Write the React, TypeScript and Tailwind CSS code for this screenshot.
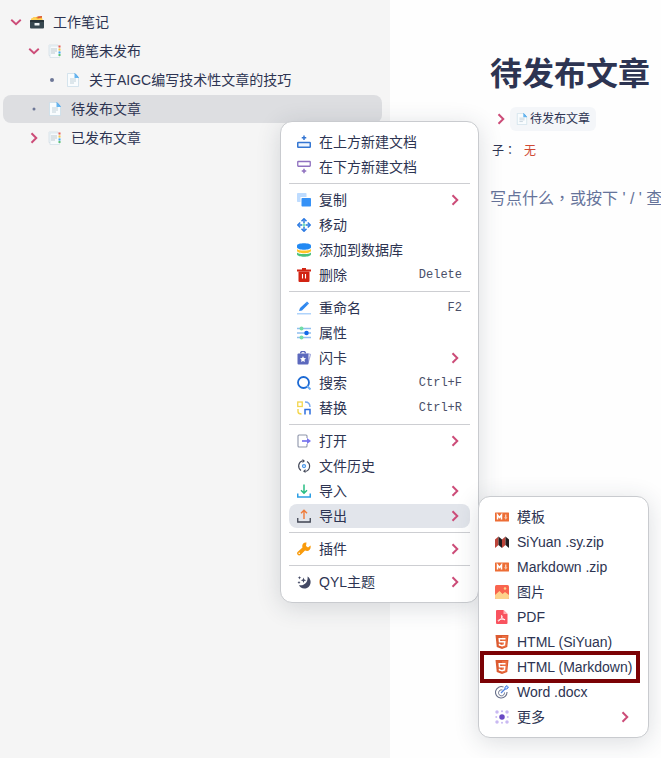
import React from 'react'

type IconProps = { className?: string }

const Svg = ({ className = 'h-3.5 w-3.5', children }: IconProps & { children: React.ReactNode }) => (
  <svg viewBox="0 0 28 28" fill="none" aria-hidden="true" className={`shrink-0 ${className}`}>
    {children}
  </svg>
)

const ChevronRight = ({ className }: IconProps) => (
  <Svg className={className}>
    <path d="M9 4.500l9.500 9.500L9 23.500" stroke="#cc4c78" strokeWidth="4" />
  </Svg>
)

const ChevronDown = () => (
  <Svg>
    <path d="M4.500 9.500l9.500 9 9.500-9" stroke="#cc4c78" strokeWidth="3.800" />
  </Svg>
)

const Bullet = ({ className = 'h-3.5 w-3.5' }: IconProps) => (
  <Svg className={className}>
    <circle cx="14" cy="14" r="4" fill="#6d7797" />
  </Svg>
)

const SmallBullet = () => (
  <Svg>
    <circle cx="14" cy="14" r="3" fill="#6d7797" />
  </Svg>
)

// Tree icons
const CardBox = () => (
  <Svg>
    <path d="M3 10l3-5 18-3v8z" fill="#f5b32d" />
    <path d="M2 7l9-3 2 3h12v4H2z" fill="#ffd257" />
    <path d="M15 3l9-1v3l-9 2z" fill="#dc5b3f" />
    <rect y="10" width="28" height="17" rx="2" fill="#37474f" />
    <path d="M0 12a2 2 0 0 1 2-2h24a2 2 0 0 1 2 2v2H0z" fill="#263238" />
    <rect x="9" y="16" width="10" height="5" rx="1" fill="#f1f5f6" />
  </Svg>
)

const Page = ({ className }: IconProps) => (
  <Svg className={className}>
    <path d="M3 1h15l7 8v18H3z" fill="#f9fcfe" stroke="#c6dbe8" strokeWidth="1.4" />
    <path d="M17 0v10h9z" fill="#65b5f0" />
    <path d="M18 1l7 8" stroke="#3d9be5" strokeWidth="1.5" />
    <path d="M8 12h12M8 16h12M8 20h8" stroke="#b4c6d1" strokeWidth="1.6" />
  </Svg>
)

const Tabs = () => (
  <Svg>
    <path d="M2 2h18v21H2z" fill="#fbfdfe" stroke="#d1dee6" strokeWidth="1.4" />
    <path d="M4 4h19v23H4z" fill="#f7fafc" stroke="#d1dee6" strokeWidth="1.4" />
    <path d="M6 10h12M6 14h12M6 18h8" stroke="#b3c0c8" strokeWidth="1.7" />
    <rect x="21" y="3" width="4" height="4" fill="#e95c50" />
    <rect x="21" y="9" width="4" height="4" fill="#f7c646" />
    <rect x="21" y="15" width="4" height="4" fill="#3da7ee" />
    <rect x="21" y="20" width="4" height="4" fill="#5abf72" />
  </Svg>
)

// Menu icons
const InsertAbove = () => (
  <Svg>
    <path d="M14 1v9M9.500 5.500h9" stroke="#3476d2" strokeWidth="3" />
    <rect x="1.500" y="15" width="25" height="9.500" rx="1" fill="#eff6ff" stroke="#3476d2" strokeWidth="3" />
  </Svg>
)

const InsertBelow = () => (
  <Svg>
    <rect x="1.500" y="3" width="25" height="9.500" rx="1" stroke="#8f70bf" strokeWidth="2.600" />
    <path d="M14 17.500v9M9.500 22h9" stroke="#8f70bf" strokeWidth="3" />
  </Svg>
)

const Copy = () => (
  <Svg>
    <rect width="19" height="18" rx="1.500" fill="#bedcff" />
    <path d="M7 8h21v20H9a2 2 0 0 1-2-2z" fill="#fff" />
    <rect x="9" y="10" width="19" height="17" rx="1.500" fill="#3692f7" />
  </Svg>
)

const Move = () => (
  <Svg>
    <path d="M14 9v10M9 14h10" stroke="#58cdb4" strokeWidth="2.400" />
    <path d="M9 6.500l5-5 5 5M9 21.500l5 5 5-5M6.500 9l-5 5 5 5M21.500 9l5 5-5 5" stroke="#2f7ce3" strokeWidth="3" />
    <path d="M14 2v8M14 18v8M2 14h8M18 14h8" stroke="#2f7ce3" strokeWidth="3" />
  </Svg>
)

const Database = () => (
  <Svg>
    <path d="M0 19c3 4 25 4 28 0v4c-2 6-26 6-28 0z" fill="#4ac17c" />
    <path d="M0 12c3 4 25 4 28 0v4c-2 6-26 6-28 0z" fill="#ffc526" />
    <path d="M0 5.500C0-1 28-1 28 5.500V9c-2 6-26 6-28 0z" fill="#2289f3" />
  </Svg>
)

const Trash = () => (
  <Svg>
    <path d="M10 0h8v3h10v4H0V3h10z" fill="#d22313" />
    <path d="M3 7h22v19a2 2 0 0 1-2 2H5a2 2 0 0 1-2-2z" fill="#d22313" />
    <path d="M11 12v9M17 12v9" stroke="#fff" strokeWidth="2.200" />
  </Svg>
)

const Pencil = () => (
  <Svg>
    <path d="M4 20l2-6L18 3l4 4-12 12z" fill="#2e87ef" />
    <path d="M20 1l4 4-2 2-4-4z" fill="#2e87ef" />
    <path d="M0 25.500h28" stroke="#afd3fb" strokeWidth="3" />
  </Svg>
)

const Sliders = () => (
  <Svg>
    <path d="M0 5h28M0 14h28M0 23h28" stroke="#8fbff0" strokeWidth="3" />
    <circle cx="9" cy="5" r="4" fill="#72dda7" />
    <circle cx="19" cy="14" r="4.500" fill="#1268e8" />
    <circle cx="9" cy="23" r="4" fill="#72dda7" />
  </Svg>
)

const Flashcard = () => (
  <Svg>
    <path d="M21 5l6 2-5 17" stroke="#aab0df" strokeWidth="2.400" />
    <rect x="1" y="5" width="22" height="22" rx="2" fill="#5c69bd" />
    <path d="M7 5c0-6 10-6 10 0" stroke="#5c69bd" strokeWidth="2.500" />
    <path d="M12 10l1.800 4 4.200.5-3 3 .8 4.500-3.800-2.200L8.200 22l.8-4.500-3-3 4.200-.5z" fill="#fff" />
  </Svg>
)

const Search = () => (
  <Svg>
    <circle cx="13" cy="13" r="11" stroke="#1c6ad4" strokeWidth="3.600" />
    <path d="M20 20l7 7" stroke="#70aef2" strokeWidth="4" />
  </Svg>
)

const Replace = () => (
  <Svg>
    <rect x="1.500" y="2" width="9" height="9" stroke="#f3d64e" strokeWidth="2.600" />
    <path d="M2 16v5c0 3 2 5 7 5" stroke="#f3d64e" strokeWidth="2.800" />
    <path d="M16 2c6 0 10 3 10 10" stroke="#78a7ed" strokeWidth="2.800" />
    <path d="M16 27V17h10v10" stroke="#2f6fde" strokeWidth="3" />
  </Svg>
)

const Open = () => (
  <Svg>
    <path d="M20 8V4a2 2 0 0 0-2-2H4a2 2 0 0 0-2 2v20a2 2 0 0 0 2 2h14a2 2 0 0 0 2-2v-4" stroke="#8e95aa" strokeWidth="2.200" />
    <path d="M10 14h11" stroke="#7774ee" strokeWidth="3.400" />
    <path d="M20 8l8 6-8 6z" fill="#7774ee" />
  </Svg>
)

const History = () => (
  <Svg>
    <path d="M11 3.500A11 11 0 0 0 8 23M17 25A11 11 0 0 0 20 5" stroke="#464b5c" strokeWidth="2.400" />
    <path d="M11 0l5 4-5 4zM17 20l-5 4.500 5 3.500z" fill="#464b5c" />
    <circle cx="14" cy="14" r="3" stroke="#4795e7" strokeWidth="2.500" />
  </Svg>
)

const Import = () => (
  <Svg>
    <path d="M14 1v17M8 12.500l6 6 6-6" stroke="#28bd83" strokeWidth="3" />
    <path d="M1.500 19v7h25v-7" stroke="#2c9ee4" strokeWidth="3" />
  </Svg>
)

const Export = () => (
  <Svg>
    <path d="M14 20V3M8 8.500l6-6 6 6" stroke="#ef7b3a" strokeWidth="2.800" />
    <path d="M1.500 18v8h25v-8" stroke="#3f4352" strokeWidth="2.600" />
  </Svg>
)

const Wrench = () => (
  <Svg>
    <path d="M27 7l-5 4-4-3 1-7c-6-1-10 4-8 10L1 20c-3 4 2 9 6 6l9-9c7 3 13-2 11-10z" fill="#f99b0c" />
    <circle cx="4.500" cy="22.500" r="1.600" fill="#fff" />
  </Svg>
)

const Theme = () => (
  <Svg>
    <path d="M21 3c9 5 8 19-1 23-7 3-14 0-16-6 9 3 19-5 17-17z" fill="#434964" />
    <path d="M13 5l1.500 4 4 1.500-4 1.500L13 16l-1.500-4-4-1.500 4-1.500zM5 2l1 2.500L8.500 5.500 6 6.500 5 9 4 6.500 1.500 5.500 4 4.500zM4 12l1 2 2 1-2 1-1 2-1-2-2-1 2-1z" fill="#434964" />
  </Svg>
)

// Export icons
const MarkdownIcon = () => (
  <Svg>
    <rect y="5" width="28" height="18" rx="1" fill="#ed6d35" />
    <path d="M5 19v-9l4 5 4-5v9" stroke="#fff" strokeWidth="3" />
    <path d="M21.500 9v7" stroke="#fbdccc" strokeWidth="2.400" />
    <path d="M18 14.500h7l-3.500 5z" fill="#f7c1a8" />
  </Svg>
)

const SiYuan = () => (
  <Svg>
    <path d="M0 9l7-6v17l-7 6z" fill="#bc4439" />
    <path d="M7 3l7 6v17l-7-6z" fill="#211d20" />
    <path d="M14 9l7-6v17l-7 6z" fill="#bc4439" />
    <path d="M21 3l7 6v17l-7-6z" fill="#211d20" />
  </Svg>
)

const Picture = () => (
  <Svg>
    <rect width="28" height="28" rx="3" fill="#f9644e" />
    <path d="M0 20l9-8 6 6 5-4 8 6v5a3 3 0 0 1-3 3H3a3 3 0 0 1-3-3z" fill="#fdd28b" />
    <circle cx="20" cy="7" r="2.500" fill="#fdd28b" />
  </Svg>
)

const Pdf = () => (
  <Svg>
    <path d="M4 0h13l8 8v18a2 2 0 0 1-2 2H4a2 2 0 0 1-2-2V2a2 2 0 0 1 2-2z" fill="#f9535f" />
    <path d="M17 0v8h8z" fill="#ffb0b4" />
    <path d="M13 11c3 0 0 8-6 11-3 0 1-5 13-3 1 2-7-1-7-8z" stroke="#fff" strokeWidth="1.800" />
  </Svg>
)

const Html5 = () => (
  <Svg>
    <path d="M1 0h26l-2.500 24L14 28 3.500 24z" fill="#dc5a30" />
    <path d="M14 2h11l-2 20.500-9 3z" fill="#ed7041" />
    <path d="M21 7.500H8.500l.5 6h10.500l-.7 6.500-4.800 1.600L9 20l-.2-2.500" stroke="#fff" strokeWidth="3" />
  </Svg>
)

const Word = () => (
  <Svg>
    <path d="M17 4A11.500 11.500 0 1 0 24 14" stroke="#69718b" strokeWidth="2.200" />
    <path d="M15 10a6 6 0 1 0 4 5" stroke="#69718b" strokeWidth="2" />
    <path d="M12 16l10-10" stroke="#5184e4" strokeWidth="2.400" />
    <path d="M20 8V4l4-3v3h3l-3 4z" fill="#dce9ff" stroke="#4c87ed" strokeWidth="2" />
  </Svg>
)

const More = () => (
  <Svg>
    <circle cx="14" cy="14" r="5.500" fill="#6949c4" />
    <g fill="#c9b9f2">
      <circle cx="4" cy="4" r="3.500" />
      <circle cx="24" cy="4" r="3.500" />
      <circle cx="4" cy="24" r="3.500" />
      <circle cx="24" cy="24" r="3.500" />
      <circle cx="14" cy="2.500" r="2" />
      <circle cx="14" cy="25.500" r="2" />
      <circle cx="2.500" cy="14" r="2" />
      <circle cx="25.500" cy="14" r="2" />
    </g>
  </Svg>
)

type Item = {
  label: string
  Icon: React.ComponentType
  accelerator?: string
  submenu?: boolean
  active?: boolean
  marked?: boolean
}

const menuGroups: Item[][] = [
  [
    { label: '在上方新建文档', Icon: InsertAbove },
    { label: '在下方新建文档', Icon: InsertBelow },
  ],
  [
    { label: '复制', Icon: Copy, submenu: true },
    { label: '移动', Icon: Move },
    { label: '添加到数据库', Icon: Database },
    { label: '删除', Icon: Trash, accelerator: 'Delete' },
  ],
  [
    { label: '重命名', Icon: Pencil, accelerator: 'F2' },
    { label: '属性', Icon: Sliders },
    { label: '闪卡', Icon: Flashcard, submenu: true },
    { label: '搜索', Icon: Search, accelerator: 'Ctrl+F' },
    { label: '替换', Icon: Replace, accelerator: 'Ctrl+R' },
  ],
  [
    { label: '打开', Icon: Open, submenu: true },
    { label: '文件历史', Icon: History },
    { label: '导入', Icon: Import, submenu: true },
    { label: '导出', Icon: Export, submenu: true, active: true },
  ],
  [{ label: '插件', Icon: Wrench, submenu: true }],
  [{ label: 'QYL主题', Icon: Theme, submenu: true }],
]

const exportItems: Item[] = [
  { label: '模板', Icon: MarkdownIcon },
  { label: 'SiYuan .sy.zip', Icon: SiYuan },
  { label: 'Markdown .zip', Icon: MarkdownIcon },
  { label: '图片', Icon: Picture },
  { label: 'PDF', Icon: Pdf },
  { label: 'HTML (SiYuan)', Icon: Html5 },
  { label: 'HTML (Markdown)', Icon: Html5, marked: true },
  { label: 'Word .docx', Icon: Word },
  { label: '更多', Icon: More, submenu: true },
]

const treeItems = [
  { label: '工作笔记', indent: 'pl-1.5', Toggle: ChevronDown, Icon: CardBox },
  { label: '随笔未发布', indent: 'pl-6', Toggle: ChevronDown, Icon: Tabs },
  { label: '关于AIGC编写技术性文章的技巧', indent: 'pl-[42px]', Toggle: Bullet, Icon: Page },
  { label: '待发布文章', indent: 'pl-6', Toggle: SmallBullet, Icon: Page, active: true },
  { label: '已发布文章', indent: 'pl-6', Toggle: ChevronRight, Icon: Tabs },
]

function MenuItem({ label, Icon, accelerator, submenu, active, marked }: Item) {
  return (
    <button
      type="button"
      role="menuitem"
      className={`relative flex h-6 w-full items-center gap-2 rounded-lg px-2 text-left text-sm whitespace-nowrap ${
        active ? 'bg-[#e2e5eb]' : ''
      }`}
    >
      <Icon />
      <span className="flex-1">{label}</span>
      {accelerator && (
        <kbd className="font-['Liberation_Mono',monospace] text-xs text-[#4a4f68]">{accelerator}</kbd>
      )}
      {submenu && <ChevronRight />}
      {marked && <span className="absolute -inset-y-1 right-0 -left-[7px] border-4 border-[#7b0205]" />}
    </button>
  )
}

const menuPanel =
  'absolute flex flex-col gap-px rounded-xl border border-[#c9cbcf] bg-white p-2 shadow-[0_4px_24px_rgba(40,50,70,0.16)]'

export default function App() {
  return (
    <div className="relative flex min-h-screen overflow-hidden bg-[#fefefe] font-['Liberation_Sans','Noto_Sans_CJK_SC',sans-serif] text-[#2d3452]">
      <nav className="w-[390px] shrink-0 bg-[#f5f5f5] py-2 pr-2 pl-[3px]">
        <ul className="flex flex-col gap-px">
          {treeItems.map(({ label, indent, Toggle, Icon, active }) => (
            <li key={label}>
              <button
                type="button"
                className={`flex h-7 w-full items-center rounded-lg text-left text-sm ${indent} ${
                  active ? 'bg-[#dddee1]' : ''
                }`}
              >
                <Toggle />
                <span className="mr-[9px] ml-[7px]">
                  <Icon />
                </span>
                {label}
              </button>
            </li>
          ))}
        </ul>
      </nav>

      <main className="min-w-0 flex-1 pt-[50px] pl-[100px] whitespace-nowrap">
        <h1 className="text-[32px] leading-12 font-bold">待发布文章</h1>
        <div className="mt-[9px] flex items-center pl-1">
          <ChevronRight />
          <a href="#doc" className="ml-0.5 flex h-6 items-center gap-0.5 rounded-md bg-[#f4f6f9] px-1.5 text-xs">
            <Page className="h-3 w-3" />
            待发布文章
          </a>
        </div>
        {/* the TC face centres full-width punctuation */}
        <div className="font-['Liberation_Sans','Noto_Sans_CJK_TC',sans-serif]">
          <p className="mt-2.5 flex gap-2 pl-0.5 text-xs leading-5">
            <span>子：</span>
            <span className="text-[#cf4a35]">无</span>
          </p>
          <p className="mt-[26px] text-base text-[#65739a]">写点什么，或按下 ' / ' 查</p>
        </div>
      </main>

      <div role="menu" aria-label="文档" className={`${menuPanel} top-[121px] left-[280px] w-[199px]`}>
        {menuGroups.map((group, i) => (
          <React.Fragment key={group[0].label}>
            {i > 0 && <hr className="my-[3px] border-[#cdced2]" />}
            {group.map((item) => (
              <MenuItem key={item.label} {...item} />
            ))}
          </React.Fragment>
        ))}
      </div>

      <div role="menu" aria-label="导出" className={`${menuPanel} top-[496px] left-[478px] w-[171px]`}>
        {exportItems.map((item) => (
          <MenuItem key={item.label} {...item} />
        ))}
      </div>
    </div>
  )
}
